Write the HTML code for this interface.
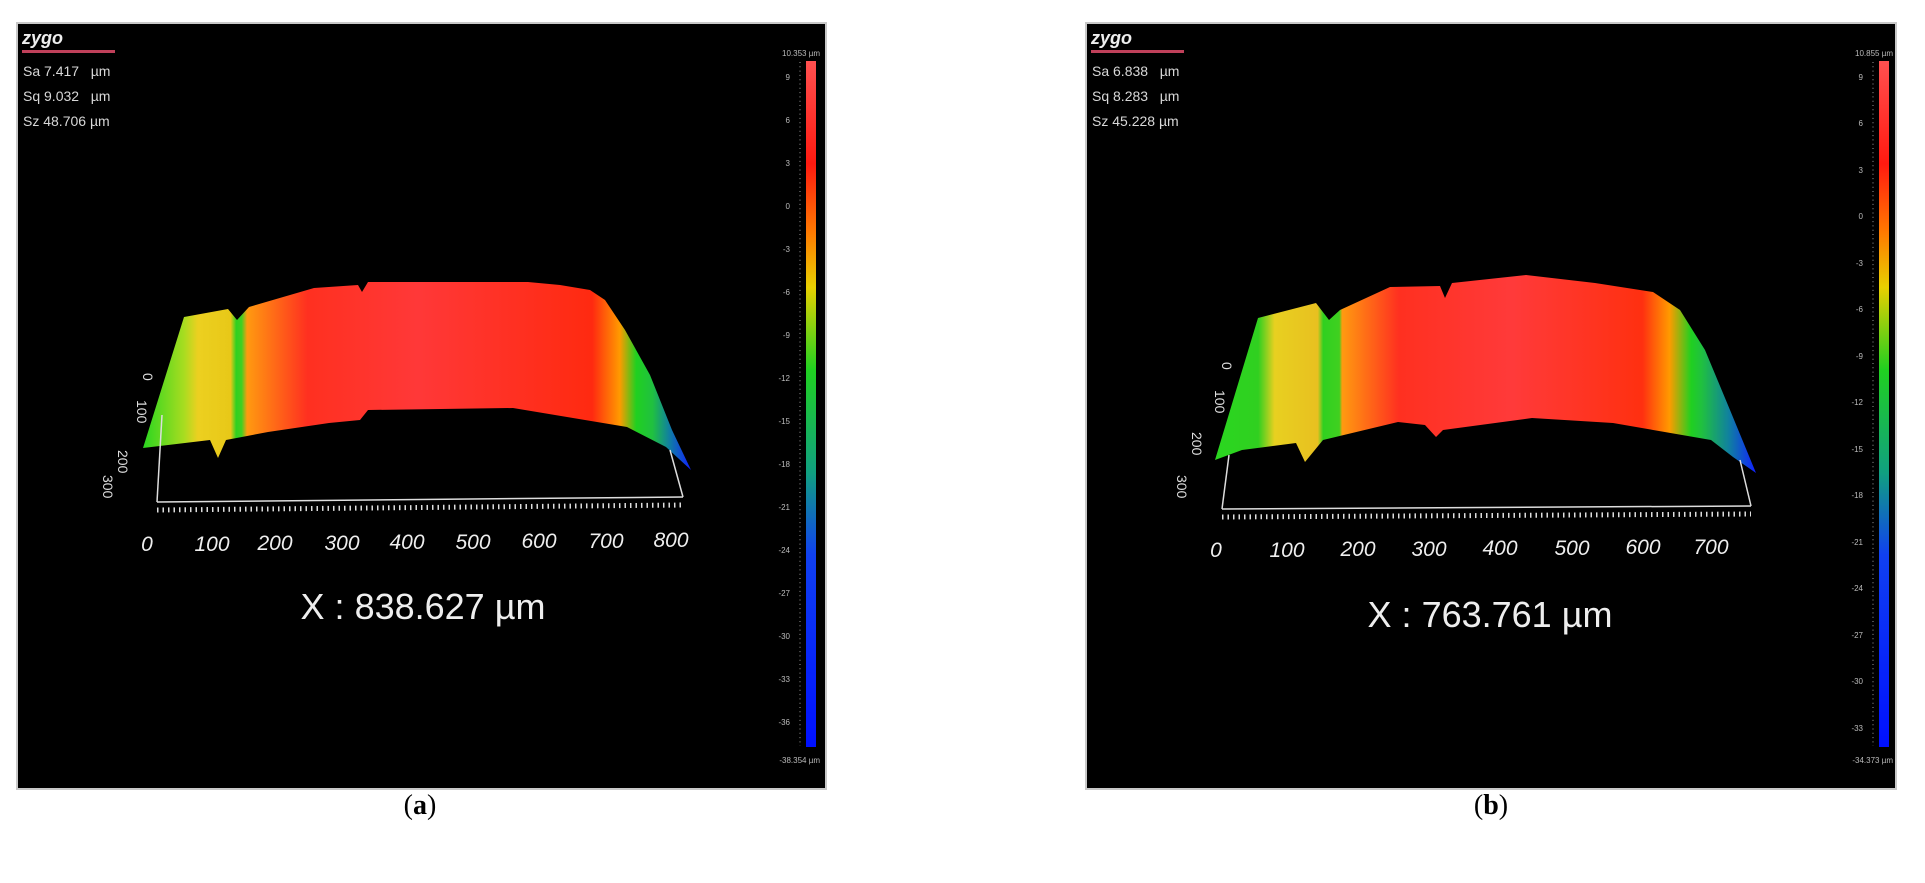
<!DOCTYPE html>
<html><head><meta charset="utf-8"><style>
body{margin:0;background:#fff;width:1925px;height:878px;overflow:hidden;font-family:"Liberation Sans",sans-serif}
</style></head><body>
<svg width="1925" height="878" xmlns="http://www.w3.org/2000/svg" font-family="Liberation Sans, DejaVu Sans, sans-serif">
<defs>
<linearGradient id="ga" gradientUnits="userSpaceOnUse" x1="143" y1="0" x2="691" y2="0">
<stop offset="0" stop-color="#2ad620"/><stop offset="0.075" stop-color="#a8dc20"/><stop offset="0.1" stop-color="#ecd020"/><stop offset="0.16" stop-color="#e8c818"/><stop offset="0.17" stop-color="#30d020"/><stop offset="0.18" stop-color="#40d020"/><stop offset="0.19" stop-color="#ff9a10"/><stop offset="0.3" stop-color="#ff3020"/><stop offset="0.5" stop-color="#ff3838"/><stop offset="0.82" stop-color="#ff2a10"/><stop offset="0.87" stop-color="#ff9a00"/><stop offset="0.9" stop-color="#20d020"/><stop offset="0.93" stop-color="#20c040"/><stop offset="0.96" stop-color="#1080a0"/><stop offset="1" stop-color="#1020ff"/>
</linearGradient>
<linearGradient id="gb" gradientUnits="userSpaceOnUse" x1="1215" y1="0" x2="1756" y2="0">
<stop offset="0" stop-color="#2ad620"/><stop offset="0.08" stop-color="#30d020"/><stop offset="0.11" stop-color="#e8d020"/><stop offset="0.19" stop-color="#e8c020"/><stop offset="0.2" stop-color="#30d020"/><stop offset="0.23" stop-color="#40d020"/><stop offset="0.235" stop-color="#ff9a10"/><stop offset="0.34" stop-color="#ff3020"/><stop offset="0.55" stop-color="#ff3a3a"/><stop offset="0.79" stop-color="#ff3010"/><stop offset="0.84" stop-color="#ff9a00"/><stop offset="0.88" stop-color="#20d020"/><stop offset="0.9" stop-color="#20c040"/><stop offset="0.95" stop-color="#1080a0"/><stop offset="1" stop-color="#1020ff"/>
</linearGradient>
<linearGradient id="cb" x1="0" y1="0" x2="0" y2="1">
<stop offset="0" stop-color="#ff5050"/><stop offset="0.15" stop-color="#ff1a10"/><stop offset="0.25" stop-color="#ff7a00"/><stop offset="0.33" stop-color="#e8d000"/><stop offset="0.45" stop-color="#20d020"/><stop offset="0.6" stop-color="#10a080"/><stop offset="0.72" stop-color="#1040f0"/><stop offset="1" stop-color="#0010ff"/>
</linearGradient>
</defs>
<rect x="17" y="23" width="809" height="766" fill="#000" stroke="#c8c8c8" stroke-width="2"/>
<rect x="1086" y="23" width="810" height="766" fill="#000" stroke="#c8c8c8" stroke-width="2"/>

<g fill="#d8d8d8" font-size="14">
<text x="22" y="44" font-weight="bold" font-size="18" fill="#eee" font-style="italic">zygo</text>
<rect x="22" y="50" width="93" height="3" fill="#c0405a"/>
<text x="23" y="76">Sa 7.417&#160;&#160; µm</text><text x="23" y="101">Sq 9.032&#160;&#160; µm</text><text x="23" y="126">Sz 48.706 µm</text>
<text x="1091" y="44" font-weight="bold" font-size="18" fill="#eee" font-style="italic">zygo</text>
<rect x="1091" y="50" width="93" height="3" fill="#c0405a"/>
<text x="1092" y="76">Sa 6.838&#160;&#160; µm</text><text x="1092" y="101">Sq 8.283&#160;&#160; µm</text><text x="1092" y="126">Sz 45.228 µm</text>
</g>

<rect x="806" y="61" width="10" height="686" fill="url(#cb)"/>
<rect x="1879" y="61" width="10" height="686" fill="url(#cb)"/>
<g fill="#bbb" font-size="8" text-anchor="end">
<text x="820" y="56">10.353 µm</text><text x="820" y="763">-38.354 µm</text>
<text x="1893" y="56">10.855 µm</text><text x="1893" y="763">-34.373 µm</text>
</g>
<g fill="#bbb" font-size="8" text-anchor="end">
<text x="790" y="80">9</text><text x="790" y="123">6</text><text x="790" y="166">3</text><text x="790" y="209">0</text><text x="790" y="252">-3</text><text x="790" y="295">-6</text><text x="790" y="338">-9</text><text x="790" y="381">-12</text><text x="790" y="424">-15</text><text x="790" y="467">-18</text><text x="790" y="510">-21</text><text x="790" y="553">-24</text><text x="790" y="596">-27</text><text x="790" y="639">-30</text><text x="790" y="682">-33</text><text x="790" y="725">-36</text>
</g>
<g fill="#bbb" font-size="8" text-anchor="end">
<text x="1863" y="80">9</text><text x="1863" y="126">6</text><text x="1863" y="173">3</text><text x="1863" y="219">0</text><text x="1863" y="266">-3</text><text x="1863" y="312">-6</text><text x="1863" y="359">-9</text><text x="1863" y="405">-12</text><text x="1863" y="452">-15</text><text x="1863" y="498">-18</text><text x="1863" y="545">-21</text><text x="1863" y="591">-24</text><text x="1863" y="638">-27</text><text x="1863" y="684">-30</text><text x="1863" y="731">-33</text>
</g>
<g stroke="#999" stroke-width="1">
<line x1="800" y1="62" x2="800" y2="746" stroke-dasharray="1 3.3"/>
<line x1="1873" y1="62" x2="1873" y2="746" stroke-dasharray="1 3.3"/>
</g>

<polygon fill="url(#ga)" points="143,448 184,317 228,309 237,320 249,307 314,288 358,285 362,292 368,282 528,282 560,285 590,290 605,300 625,330 650,375 672,430 691,470 666,447 627,427 513,408 368,410 360,420 329,423 268,432 226,440 218,458 210,440 143,448"/>
<g stroke="#ddd" stroke-width="1.5" fill="none">
<line x1="157" y1="502" x2="683" y2="497"/>
<line x1="157" y1="502" x2="162" y2="415"/>
<line x1="683" y1="497" x2="670" y2="450"/>
<line x1="157" y1="510" x2="683" y2="505" stroke-dasharray="1.5 4" stroke-width="5"/>
</g>
<g fill="#eee" font-size="21" font-style="italic" text-anchor="middle">
<text x="147" y="551">0</text><text x="212" y="551">100</text><text x="275" y="550">200</text><text x="342" y="550">300</text><text x="407" y="549">400</text><text x="473" y="549">500</text><text x="539" y="548">600</text><text x="606" y="548">700</text><text x="671" y="547">800</text>
</g>
<g fill="#ddd" font-size="14">
<text transform="translate(143,373) rotate(90)">0</text>
<text transform="translate(137,400) rotate(90)">100</text>
<text transform="translate(118,450) rotate(90)">200</text>
<text transform="translate(103,475) rotate(90)">300</text>
</g>
<text x="423" y="619" fill="#eee" font-size="36" text-anchor="middle">X : 838.627 µm</text>

<polygon fill="url(#gb)" points="1215,460 1258,318 1316,303 1329,320 1340,310 1390,287 1440,286 1445,298 1452,283 1526,275 1595,283 1653,292 1680,310 1705,350 1730,410 1756,473 1733,457 1711,440 1613,423 1532,418 1443,430 1436,437 1425,425 1398,422 1323,440 1305,462 1296,443 1242,450 1215,460"/>
<g stroke="#ddd" stroke-width="1.5" fill="none">
<line x1="1222" y1="509" x2="1751" y2="506"/>
<line x1="1222" y1="509" x2="1229" y2="455"/>
<line x1="1751" y1="506" x2="1740" y2="460"/>
<line x1="1222" y1="517" x2="1751" y2="514" stroke-dasharray="1.5 4" stroke-width="5"/>
</g>
<g fill="#eee" font-size="21" font-style="italic" text-anchor="middle">
<text x="1216" y="557">0</text><text x="1287" y="557">100</text><text x="1358" y="556">200</text><text x="1429" y="556">300</text><text x="1500" y="555">400</text><text x="1572" y="555">500</text><text x="1643" y="554">600</text><text x="1711" y="554">700</text>
</g>
<g fill="#ddd" font-size="14">
<text transform="translate(1222,362) rotate(90)">0</text>
<text transform="translate(1215,390) rotate(90)">100</text>
<text transform="translate(1192,432) rotate(90)">200</text>
<text transform="translate(1177,475) rotate(90)">300</text>
</g>
<text x="1490" y="627" fill="#eee" font-size="36" text-anchor="middle">X : 763.761 µm</text>

<g font-family="Liberation Serif, serif" font-size="28" fill="#000" text-anchor="middle">
<text x="420" y="814">(<tspan font-weight="bold">a</tspan>)</text>
<text x="1491" y="814">(<tspan font-weight="bold">b</tspan>)</text>
</g>
</svg>
</body></html>
